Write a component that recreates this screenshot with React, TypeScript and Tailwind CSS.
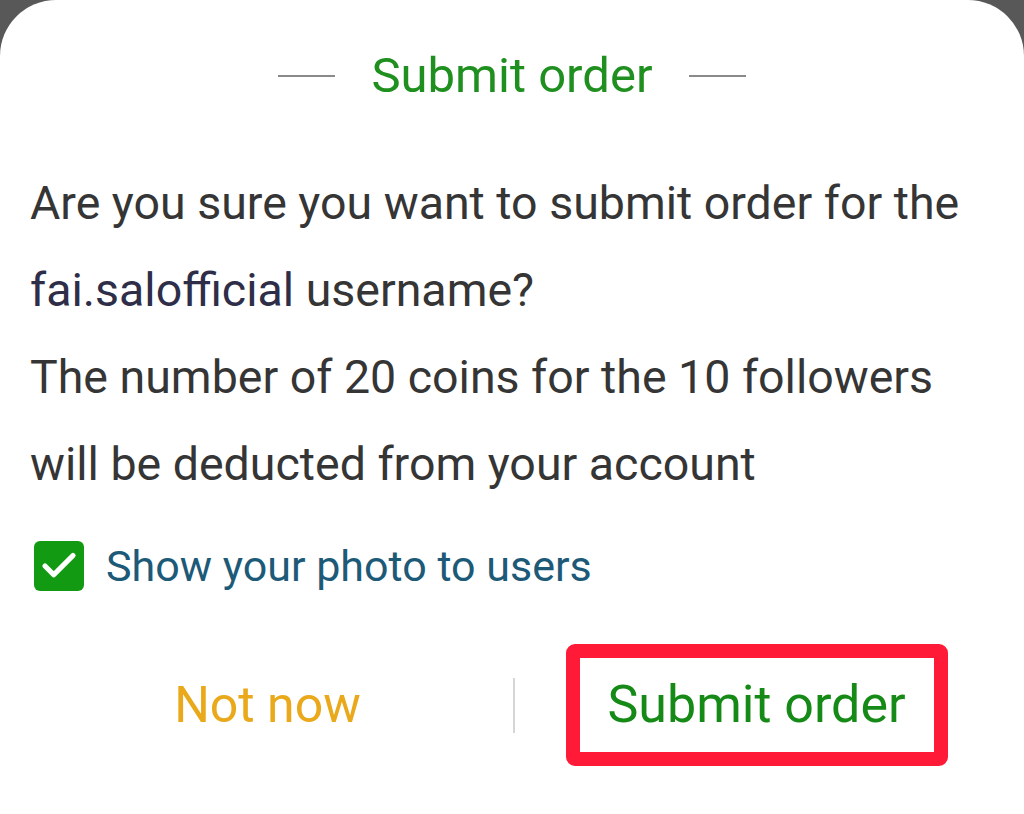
import { Check } from "lucide-react";

export default function App() {
  return (
    <div className="h-[814px] w-full overflow-hidden bg-[#585858]" style={{ fontFamily: "Roboto, 'Noto Sans', sans-serif" }}>
      <div className="flex h-full flex-col rounded-t-[56px] bg-white px-[30px]">
        {/* Title */}
        <div className="flex items-center justify-center gap-[36px] pt-[46px]">
          <span className="h-[2px] w-[57px] bg-[#8a8a8a]" />
          <h1 className="text-[49px] leading-[60px] text-[#1f8f1f]">Submit order</h1>
          <span className="h-[2px] w-[57px] bg-[#8a8a8a]" />
        </div>

        {/* Body */}
        <div className="mt-[54px] text-[46.5px] leading-[87px] text-[#353535]">
          <p>Are you sure you want to submit order for the</p>
          <p>
            <span className="text-[#2e2e48]">fai.salofficial</span> username?
          </p>
          <p>The number of 20 coins for the 10 followers</p>
          <p>will be deducted from your account</p>
        </div>

        {/* Checkbox */}
        <label className="mt-[33px] flex items-center gap-[22px] pl-[4px]">
          <span className="flex h-[50px] w-[50px] items-center justify-center rounded-[6px] bg-[#129a12]">
            <Check className="h-[42px] w-[42px] text-white" strokeWidth={3} />
          </span>
          <span className="text-[43px] leading-[50px] text-[#1d5a78]">Show your photo to users</span>
        </label>

        {/* Actions */}
        <div className="mt-[53px] flex items-center">
          <div className="flex flex-1 justify-center pr-[8px]">
            <button className="text-[50px] leading-[60px] text-[#e9a91b]">Not now</button>
          </div>
          <span className="h-[55px] w-[2px] bg-[#d6d6d6]" />
          <div className="flex flex-1 justify-center pl-[4px]">
            <div className="flex h-[122px] w-[382px] items-center justify-center rounded-[9px] border-[14px] border-[#ff1a38]">
              <button className="text-[52px] leading-[60px] text-[#168a16]">Submit order</button>
            </div>
          </div>
        </div>
      </div>
    </div>
  );
}
